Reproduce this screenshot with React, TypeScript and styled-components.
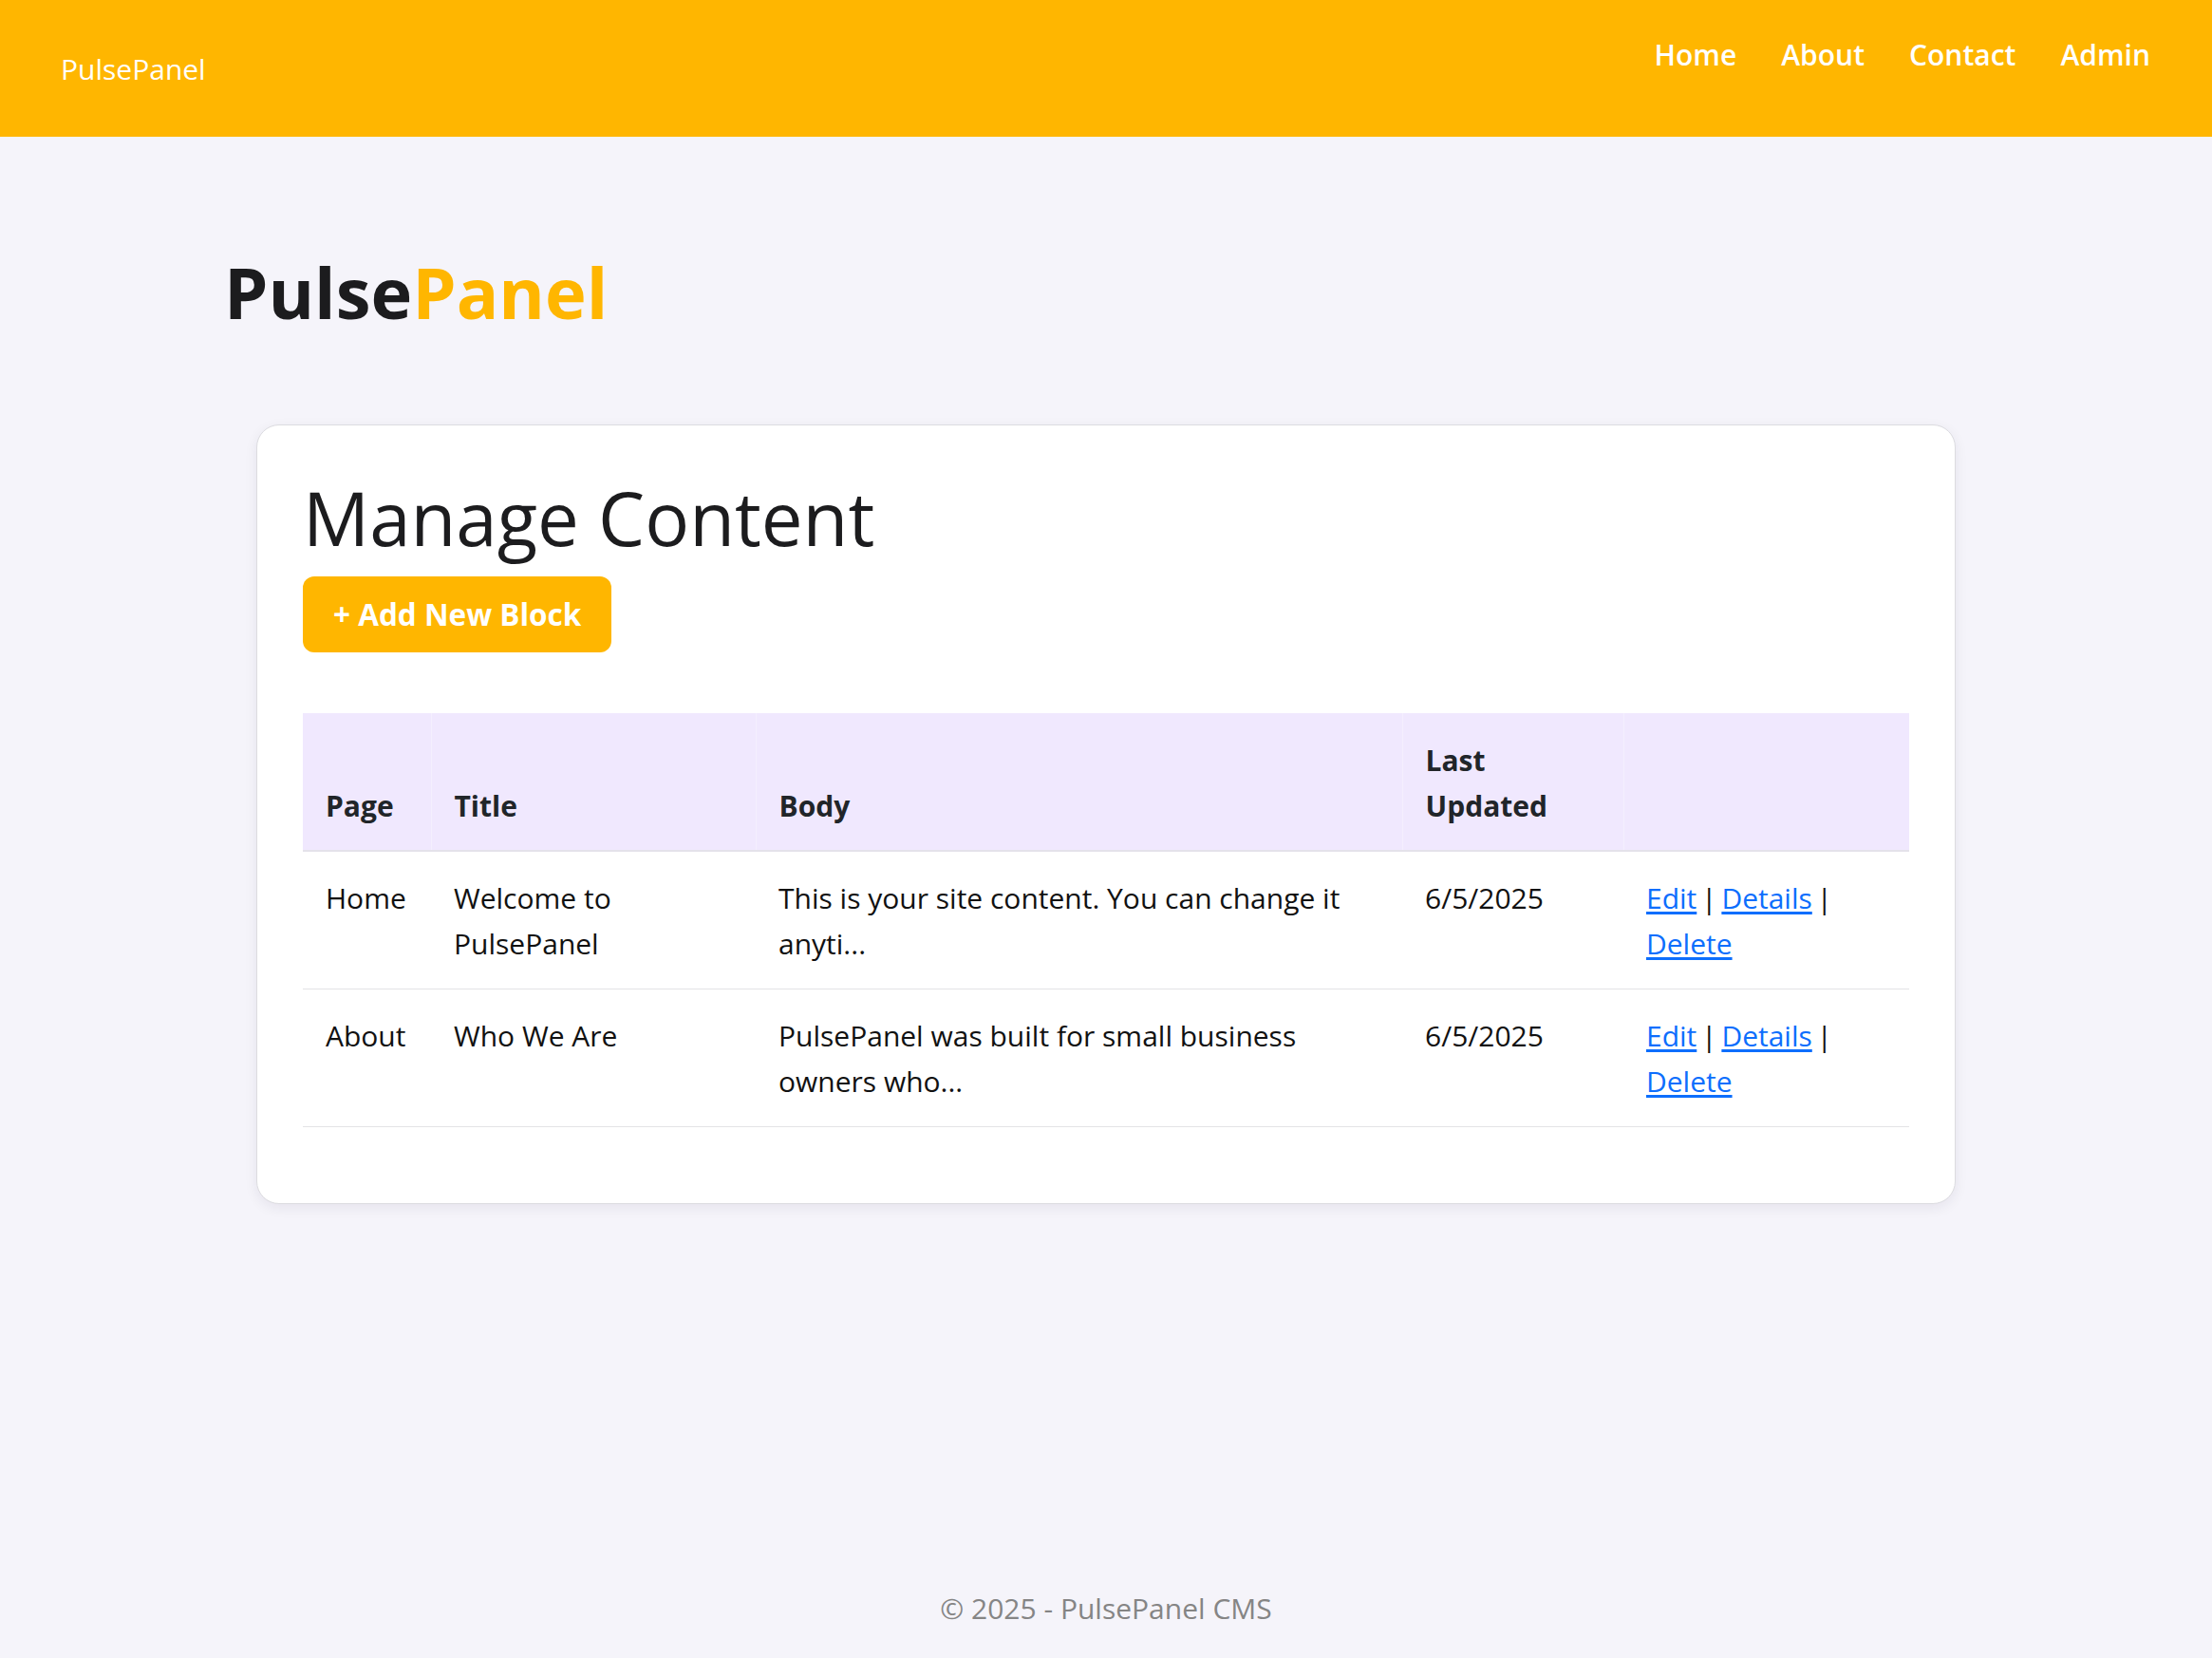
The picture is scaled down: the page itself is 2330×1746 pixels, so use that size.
import React from "react";
import styled, { createGlobalStyle } from "styled-components";

const GlobalStyle = createGlobalStyle`
  * { box-sizing: border-box; }
  html, body { margin: 0; padding: 0; }
  body {
    background: #f5f4fa;
    color: #212529;
    font-family: "Open Sans", "Noto Sans", "Liberation Sans", sans-serif;
    font-size: 30px;
    line-height: 48px;
  }
`;

const Page = styled.div`
  min-height: 100vh;
  display: flex;
  flex-direction: column;
`;

const Navbar = styled.header`
  height: 144px;
  background: #ffb600;
  display: flex;
  justify-content: space-between;
  padding: 0 65px 0 64px;
`;

const Brand = styled.a`
  align-self: center;
  color: #ffffff;
  font-size: 30px;
  text-decoration: none;
  line-height: 48px;
  padding-top: 2px;
`;

const NavList = styled.nav`
  display: flex;
  gap: 47px;
  padding-top: 34px;
  align-self: flex-start;
`;

const NavLink = styled.a`
  color: #ffffff;
  font-weight: 600;
  font-size: 30px;
  line-height: 48px;
  text-decoration: none;
`;

const Main = styled.main`
  flex: 1;
  width: 1920px;
  margin: 0 auto;
  padding: 120px 24px 0;
`;

const Logo = styled.h1`
  margin: 0 0 94px;
  padding-left: 7px;
  font-size: 74px;
  line-height: 1.2;
  font-weight: 700;
  color: #1c1c1e;
`;

const Accent = styled.span`
  color: #ffb600;
`;

const Card = styled.section`
  width: 1790px;
  margin: 0 auto;
  background: #ffffff;
  border: 1px solid #dcdce0;
  border-radius: 24px;
  box-shadow: 0 4px 14px rgba(30, 20, 60, 0.07);
  padding: 51px 48px 48px;
`;

const Heading = styled.h2`
  margin: 0 0 15px;
  font-size: 78px;
  line-height: 1.2;
  font-weight: 500;
  color: #1c1c1e;
`;

const AddButton = styled.button`
  display: inline-block;
  border: none;
  background: #ffb600;
  color: #ffffff;
  font-family: inherit;
  font-weight: 700;
  font-size: 31.5px;
  line-height: 48px;
  padding: 16px 32px;
  border-radius: 12px;
  cursor: pointer;
`;

const Table = styled.table`
  margin-top: 64px;
  margin-bottom: 32px;
  width: 1692px;
  border-collapse: collapse;
  table-layout: fixed;
`;

const HeadCell = styled.th<{ $last?: boolean }>`
  background: #f0e8fe;
  text-align: left;
  vertical-align: bottom;
  font-weight: 700;
  padding: 26px 24px 22px;
  border-bottom: 2px solid #e4e2ea;
  border-right: ${(p) => (p.$last ? "none" : "1px solid #f4effe")};
`;

const Cell = styled.td`
  vertical-align: top;
  padding: 25px 24px 23px;
  border-bottom: 1px solid #e3e3e6;
  color: #111;
`;

const ActionCell = styled(Cell)`
  word-spacing: -3px;
`;

const ActionLink = styled.a`
  color: #0d6efd;
  text-decoration: underline;
  text-underline-offset: 3px;
  word-spacing: normal;
`;

const Footer = styled.footer`
  text-align: center;
  color: #858585;
  font-size: 30px;
  line-height: 48px;
  padding: 0 0 28px;
`;

type Row = { page: string; title: string; body: string; updated: string };

const rows: Row[] = [
  {
    page: "Home",
    title: "Welcome to PulsePanel",
    body: "This is your site content. You can change it anyti...",
    updated: "6/5/2025",
  },
  {
    page: "About",
    title: "Who We Are",
    body: "PulsePanel was built for small business owners who...",
    updated: "6/5/2025",
  },
];

const colWidths = [135, 342, 681, 233, 301];

export default function App() {
  return (
    <>
      <GlobalStyle />
      <Page>
        <Navbar>
          <Brand href="#">PulsePanel</Brand>
          <NavList>
            <NavLink href="#">Home</NavLink>
            <NavLink href="#">About</NavLink>
            <NavLink href="#">Contact</NavLink>
            <NavLink href="#">Admin</NavLink>
          </NavList>
        </Navbar>
        <Main>
          <Logo>
            Pulse<Accent>Panel</Accent>
          </Logo>
          <Card>
            <Heading>Manage Content</Heading>
            <AddButton>+ Add New Block</AddButton>
            <Table>
              <colgroup>
                {colWidths.map((w, i) => (
                  <col key={i} style={{ width: w }} />
                ))}
              </colgroup>
              <thead>
                <tr>
                  <HeadCell>Page</HeadCell>
                  <HeadCell>Title</HeadCell>
                  <HeadCell>Body</HeadCell>
                  <HeadCell>Last Updated</HeadCell>
                  <HeadCell $last></HeadCell>
                </tr>
              </thead>
              <tbody>
                {rows.map((r) => (
                  <tr key={r.page}>
                    <Cell>{r.page}</Cell>
                    <Cell>{r.title}</Cell>
                    <Cell>{r.body}</Cell>
                    <Cell>{r.updated}</Cell>
                    <ActionCell>
                      <ActionLink href="#">Edit</ActionLink> |{" "}
                      <ActionLink href="#">Details</ActionLink> |{" "}
                      <ActionLink href="#">Delete</ActionLink>
                    </ActionCell>
                  </tr>
                ))}
              </tbody>
            </Table>
          </Card>
        </Main>
        <Footer>© 2025 - PulsePanel CMS</Footer>
      </Page>
    </>
  );
}
